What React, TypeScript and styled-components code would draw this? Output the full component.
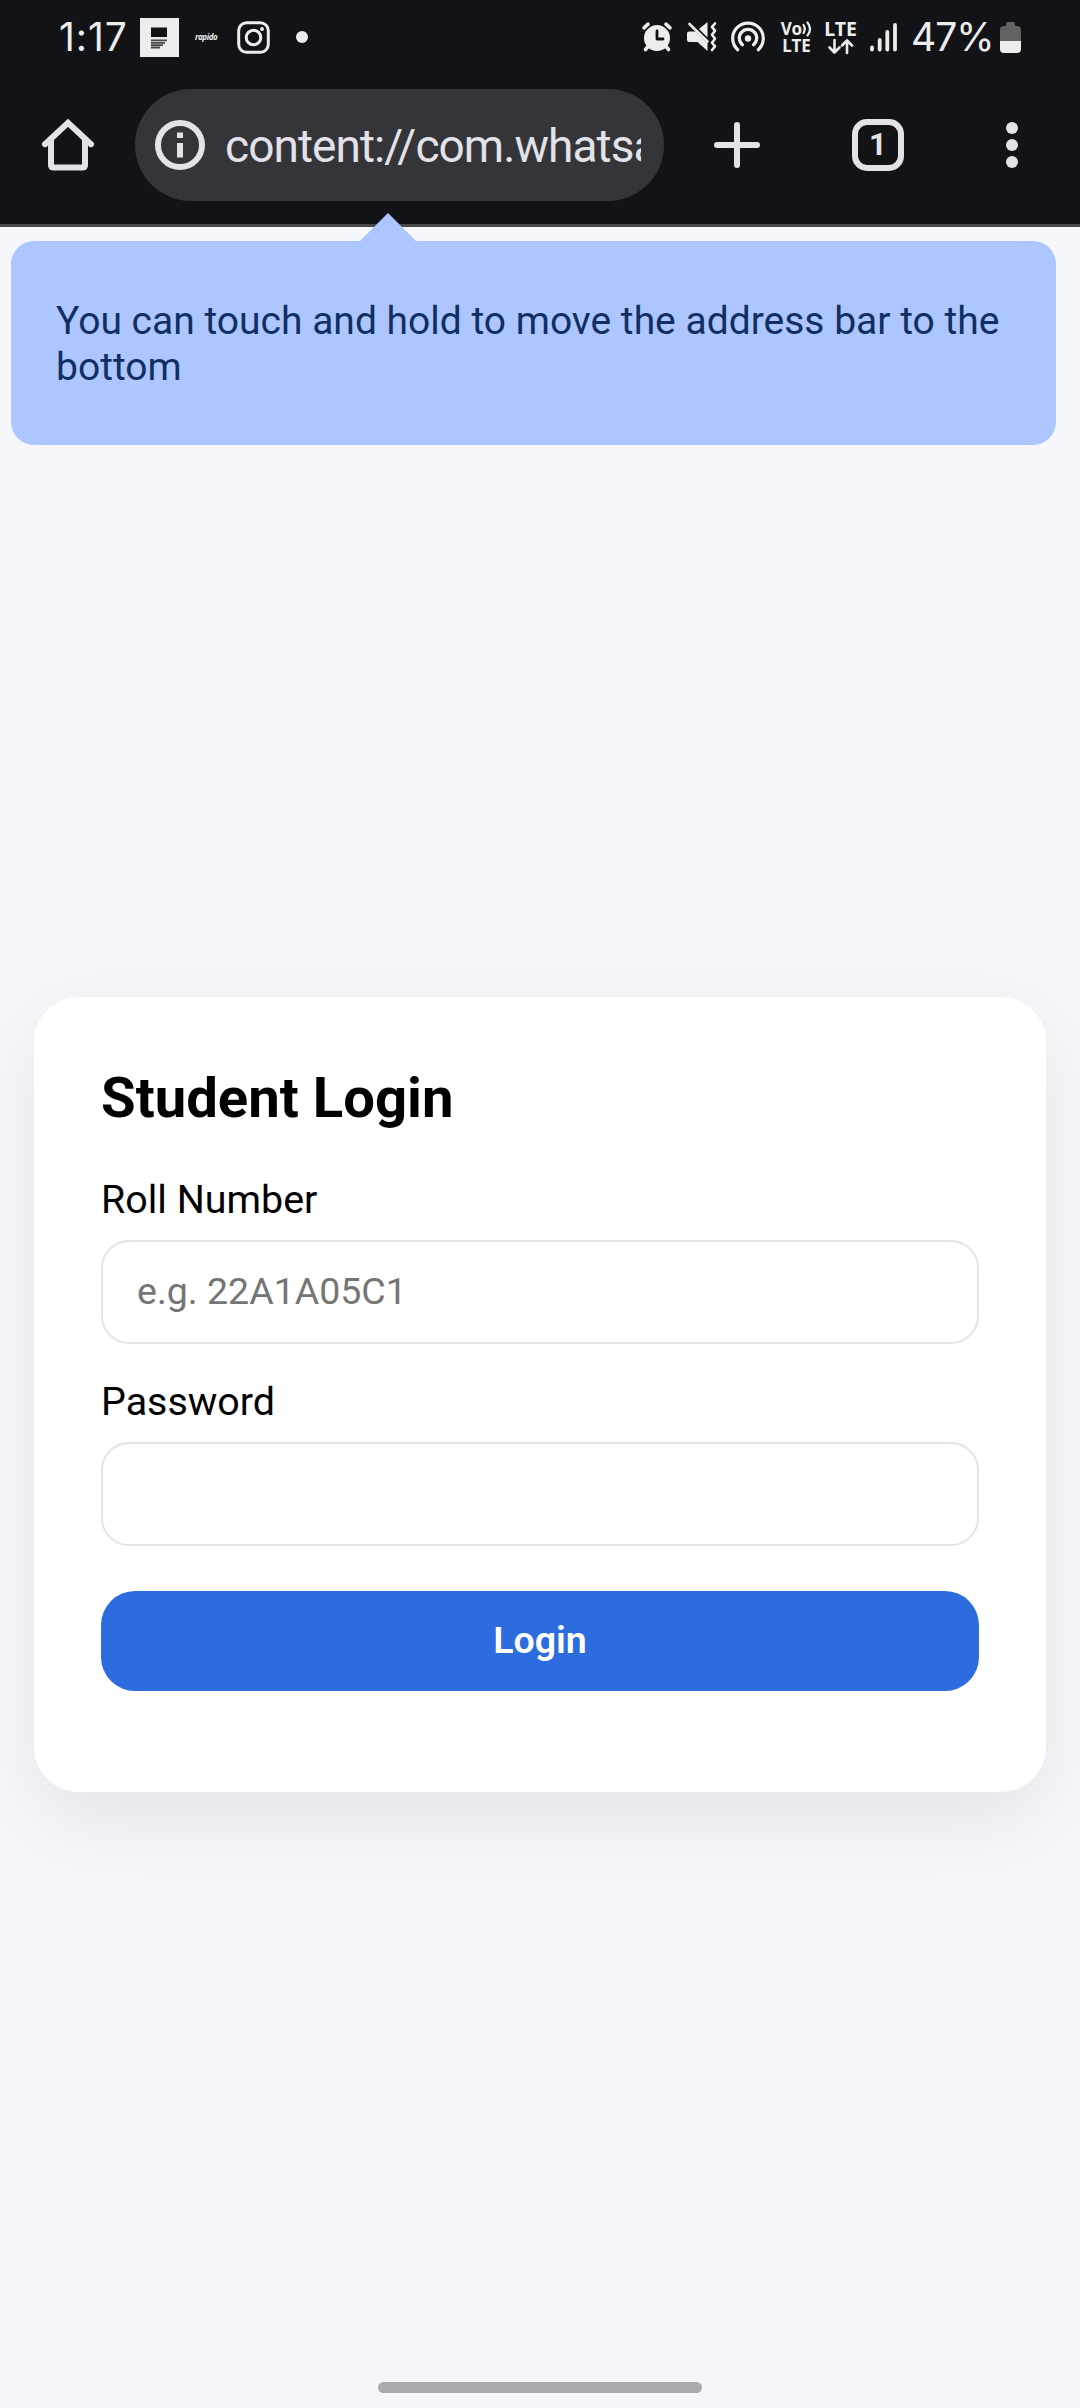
import React from "react";
import styled, { createGlobalStyle } from "styled-components";

const GlobalStyle = createGlobalStyle`
  *, *::before, *::after { box-sizing: border-box; }
  html, body { margin: 0; padding: 0; background: #f5f7fb; }
  body { font-family: Roboto, "Liberation Sans", sans-serif; }
  svg { display: block; flex: none; overflow: visible; }
`;

const Screen = styled.div`
  width: 1080px;
  height: 2408px;
  display: flex;
  flex-direction: column;
  background: #f5f7fb;
  overflow: hidden;
`;

const StatusBar = styled.header`
  height: 80px;
  flex: none;
  display: flex;
  align-items: center;
  justify-content: space-between;
  padding: 0 59px 6px 59px;
  background: #121317;
  color: #ededed;
`;

const StatusGroup = styled.div`
  display: flex;
  align-items: center;
`;

const StatusText = styled.span<{ $width: number; $gap: number; $spacing: number }>`
  width: ${(p) => p.$width}px;
  margin-right: ${(p) => p.$gap}px;
  font: 400 39px/40px Inter, "Noto Sans", sans-serif;
  letter-spacing: ${(p) => p.$spacing}px;
  white-space: nowrap;
`;

const Glyph = styled.span<{ $gap: number }>`
  margin-right: ${(p) => p.$gap}px;
`;

const Rapido = styled.span`
  width: 23px;
  margin: 0 19px 0 16px;
  font: italic 700 8px/10px "Open Sans", sans-serif;
  letter-spacing: -0.4px;
`;

const Stack = styled.span<{ $width: number; $gap: number }>`
  width: ${(p) => p.$width}px;
  margin-right: ${(p) => p.$gap}px;
  display: flex;
  flex-direction: column;
  align-items: center;
`;

const StackLine = styled.span<{ $size?: number }>`
  height: 17px;
  display: flex;
  align-items: center;
  font: 700 ${(p) => p.$size ?? 17}px/17px "Noto Sans", sans-serif;
  white-space: nowrap;
`;

const Toolbar = styled.nav`
  height: 147px;
  flex: none;
  display: flex;
  align-items: flex-start;
  padding: 9px 0 0 42px;
  background: #121317;
  border-bottom: 3px solid #474747;
`;

const ToolButton = styled.button<{ $width: number; $gap: number }>`
  width: ${(p) => p.$width}px;
  height: 112px;
  margin-right: ${(p) => p.$gap}px;
  padding: 0;
  border: 0;
  display: flex;
  align-items: center;
  justify-content: center;
  background: none;
  color: #e3e2e9;
`;

const AddressBar = styled.div`
  width: 529px;
  height: 112px;
  margin-right: 50px;
  padding: 0 23px 0 20px;
  border-radius: 56px;
  display: flex;
  align-items: center;
  gap: 20px;
  background: #343539;
`;

const Url = styled.span`
  flex: 1;
  padding-top: 1px;
  overflow: hidden;
  white-space: nowrap;
  font: 400 46px/60px Roboto, sans-serif;
  letter-spacing: -0.93px;
  color: #e3e2e9;
`;

const Tip = styled.aside`
  position: relative;
  width: 1045px;
  height: 204px;
  flex: none;
  margin: 14px 0 0 11px;
  padding: 57px 40px 0 45px;
  border-radius: 23px;
  background: #adc6ff;
  color: #102f65;
  font-size: 39px;
  line-height: 46px;

  &::before {
    content: "";
    position: absolute;
    left: 349px;
    top: -28px;
    border: 28px solid transparent;
    border-top-width: 0;
    border-bottom-color: #adc6ff;
  }
`;

const Card = styled.form`
  width: 1012px;
  height: 795px;
  flex: none;
  margin: 552px 0 0 34px;
  padding: 68px 67px 0;
  border-radius: 45px;
  background: #fff;
  box-shadow: 0 28px 84px rgba(0, 0, 0, 0.08);
  display: flex;
  flex-direction: column;
`;

const Title = styled.h1`
  margin: 0 0 45px;
  font-size: 56.25px;
  line-height: 67px;
  font-weight: 700;
  color: #000;
`;

const Label = styled.label`
  height: 46px;
  margin-bottom: 17px;
  font-size: 39.4px;
  line-height: 46px;
  color: #000;
`;

const Input = styled.input<{ $gap: number }>`
  width: 100%;
  height: 104px;
  margin: 0 0 ${(p) => p.$gap}px;
  padding: 0 34px 2px;
  border: 2px solid #e3e4ea;
  border-radius: 28px;
  outline: 0;
  background: #fff;
  font: 400 37.5px/44px Roboto, sans-serif;
  &::placeholder { color: #757575; opacity: 1; }
`;

const Submit = styled.button`
  height: 100px;
  padding: 0 0 2px;
  border: 0;
  border-radius: 34px;
  background: #2d6cdf;
  color: #fff;
  font: 600 37.5px/44px Roboto, sans-serif;
`;

const HomeHandle = styled.div`
  width: 324px;
  height: 11px;
  margin: auto auto 15px;
  border-radius: 6px;
  background: #a9aaad;
`;

const NewsIcon = () => (
  <svg width="39" height="39" viewBox="0 0 39 39">
    <path fill="#ededed" d="M0 0h39v39H0z" />
    <path fill="#121317" d="M11 9.5h16V19H11z" />
    <path stroke="#444" strokeWidth="1.8" d="M11 22.3h16M11 24.8h14M11 27.2h12M11 29.5h9" />
  </svg>
);

const InstagramIcon = () => (
  <svg width="33" height="33" viewBox="0 0 33 33" fill="none" stroke="#ededed" strokeWidth="3">
    <rect x="1.7" y="1.7" width="29.6" height="29.6" rx="8" />
    <circle cx="16.5" cy="16.5" r="7.3" />
    <circle cx="25" cy="8" r="2" fill="#ededed" stroke="none" />
  </svg>
);

const DotIcon = () => (
  <svg width="12" height="12"><circle cx="6" cy="6" r="6" fill="#ededed" /></svg>
);

const AlarmIcon = () => (
  <svg width="30" height="30" viewBox="0 0 30 30">
    <circle cx="15" cy="16" r="13" fill="#ededed" />
    <path d="M1.5 9.5 9.5 2M28.5 9.5l-8-7.5" stroke="#121317" strokeWidth="2" />
    <g stroke="#ededed" strokeWidth="3.6" strokeLinecap="round">
      <path d="M2 5.8 6 2.2M28 5.8l-4-3.6M6 24.5l-2.5 3M24 24.5l2.5 3" />
    </g>
    <path d="M15 9v8h6" fill="none" stroke="#121317" strokeWidth="2.8" strokeLinecap="round" strokeLinejoin="round" />
  </svg>
);

const MuteIcon = () => (
  <svg width="30" height="30" viewBox="0 0 30 30" fill="#ededed">
    <path d="M2 9.5h6.5l12 11.5v8L10.5 20H2q-2 0-2-2v-6.5q0-2 2-2zM20.5 0v15.5L12 7z" />
    <path d="m2.5 2 18 17.500" stroke="#ededed" strokeWidth="2.6" strokeLinecap="round" />
    <path d="m28 1.5-3 3.4 3 4-3 3.9 3 4-3 3.900 3 3.700-3 3.600" fill="none" stroke="#ededed" strokeWidth="2.6" strokeLinecap="round" strokeLinejoin="round" />
  </svg>
);

const HotspotIcon = () => (
  <svg width="34" height="30" viewBox="0 0 34 30" fill="none" stroke="#ededed" strokeWidth="3.2" strokeLinecap="round">
    <path d="M6.7 27.7a15.3 15.3 0 1 1 20.6 0" />
    <path d="M11.5 22.8a8.7 8.7 0 1 1 11 0" />
    <circle cx="17" cy="16.5" r="3.2" fill="#ededed" stroke="none" />
  </svg>
);

const WaveIcon = () => (
  <svg width="10" height="17" viewBox="0 0 10 17" fill="none" stroke="#ededed" strokeWidth="2.2" strokeLinecap="round">
    <path d="M1.500 5q2.500 4 0 8M5.500 2.500q5 6.500 0 13" />
  </svg>
);

const TrafficIcon = () => (
  <svg width="26" height="17" viewBox="0 -2 26 17" fill="none" stroke="#ededed" strokeWidth="2.6" strokeLinecap="round" strokeLinejoin="round">
    <path d="M6.5 1v12.500M1.500 8.500l5 5 5-5M19 14V1.500M14 6.500l5-5 5 5" />
  </svg>
);

const SignalIcon = () => (
  <svg width="28" height="30" viewBox="0 0 28 30" stroke="#ededed" strokeWidth="3.8" strokeLinecap="round">
    <path d="M2 25.500v2M9.700 18v9.500M17.300 10v17.500M25 3v24.500" />
  </svg>
);

const BatteryIcon = () => (
  <svg width="21" height="31" viewBox="0 0 21 31">
    <path fill="#626262" d="M6 2q0-2 2-2h5q2 0 2 2v2h2q4 0 4 4v11H0V8q0-4 4-4h2z" />
    <path fill="#ededed" d="M0 19h21v8q0 4-4 4H4q-4 0-4-4z" />
  </svg>
);

const HomeIcon = () => (
  <svg width="52" height="52" viewBox="0 0 52 52" fill="none" stroke="currentColor" strokeWidth="6" strokeLinecap="round" strokeLinejoin="miter">
    <path d="M3 25.200 26 3.800l23 21.400" />
    <path d="M9 22v24q0 2.500 2.500 2.500h29q2.500 0 2.500-2.500V22" />
  </svg>
);

const InfoIcon = () => (
  <svg width="50" height="50" viewBox="0 0 50 50" fill="#e3e2e9">
    <circle cx="25" cy="25" r="22" fill="none" stroke="#e3e2e9" strokeWidth="6" />
    <path d="M22 12.500h6v5.500h-6zM22 23h6v14.500h-6z" />
  </svg>
);

const PlusIcon = () => (
  <svg width="46" height="46" viewBox="0 0 46 46" stroke="currentColor" strokeWidth="6" strokeLinecap="round">
    <path d="M23 3v40M3 23h40" />
  </svg>
);

const TabCount = styled.span`
  width: 52px;
  height: 52px;
  border: 6px solid currentColor;
  border-radius: 15px;
  display: flex;
  align-items: center;
  justify-content: center;
  font: 700 31px/40px Roboto, sans-serif;
`;

const MenuIcon = () => (
  <svg width="12" height="46" viewBox="0 0 12 46" fill="currentColor">
    <circle cx="6" cy="6" r="6" /><circle cx="6" cy="23" r="6" /><circle cx="6" cy="40" r="6" />
  </svg>
);

export default function App() {
  return (
    <Screen>
      <GlobalStyle />
      <StatusBar>
        <StatusGroup>
          <StatusText $width={70} $gap={11} $spacing={0.9}>1:17</StatusText>
          <NewsIcon />
          <Rapido>rapido</Rapido>
          <Glyph $gap={26}><InstagramIcon /></Glyph>
          <DotIcon />
        </StatusGroup>
        <StatusGroup>
          <Glyph $gap={15}><AlarmIcon /></Glyph>
          <Glyph $gap={14}><MuteIcon /></Glyph>
          <Glyph $gap={16}><HotspotIcon /></Glyph>
          <Stack $width={31} $gap={12}>
            <StackLine>Vo<WaveIcon /></StackLine>
            <StackLine>LTE</StackLine>
          </Stack>
          <Stack $width={33} $gap={13}>
            <StackLine $size={19.5}>LTE</StackLine>
            <TrafficIcon />
          </Stack>
          <Glyph $gap={13}><SignalIcon /></Glyph>
          <StatusText $width={81} $gap={8} $spacing={-1}>47%</StatusText>
          <BatteryIcon />
        </StatusGroup>
      </StatusBar>
      <Toolbar>
        <ToolButton type="button" aria-label="Home" $width={52} $gap={41}><HomeIcon /></ToolButton>
        <AddressBar><InfoIcon /><Url>content://com.whatsapp</Url></AddressBar>
        <ToolButton type="button" aria-label="New tab" $width={46} $gap={92}><PlusIcon /></ToolButton>
        <ToolButton type="button" aria-label="Tabs" $width={52} $gap={102}><TabCount>1</TabCount></ToolButton>
        <ToolButton type="button" aria-label="Menu" $width={12} $gap={0}><MenuIcon /></ToolButton>
      </Toolbar>
      <Tip>You can touch and hold to move the address bar to the bottom</Tip>
      <Card onSubmit={(e) => e.preventDefault()}>
        <Title>Student Login</Title>
        <Label htmlFor="roll">Roll Number</Label>
        <Input id="roll" placeholder="e.g. 22A1A05C1" $gap={35} />
        <Label htmlFor="password">Password</Label>
        <Input id="password" type="password" $gap={45} />
        <Submit type="submit">Login</Submit>
      </Card>
      <HomeHandle />
    </Screen>
  );
}
